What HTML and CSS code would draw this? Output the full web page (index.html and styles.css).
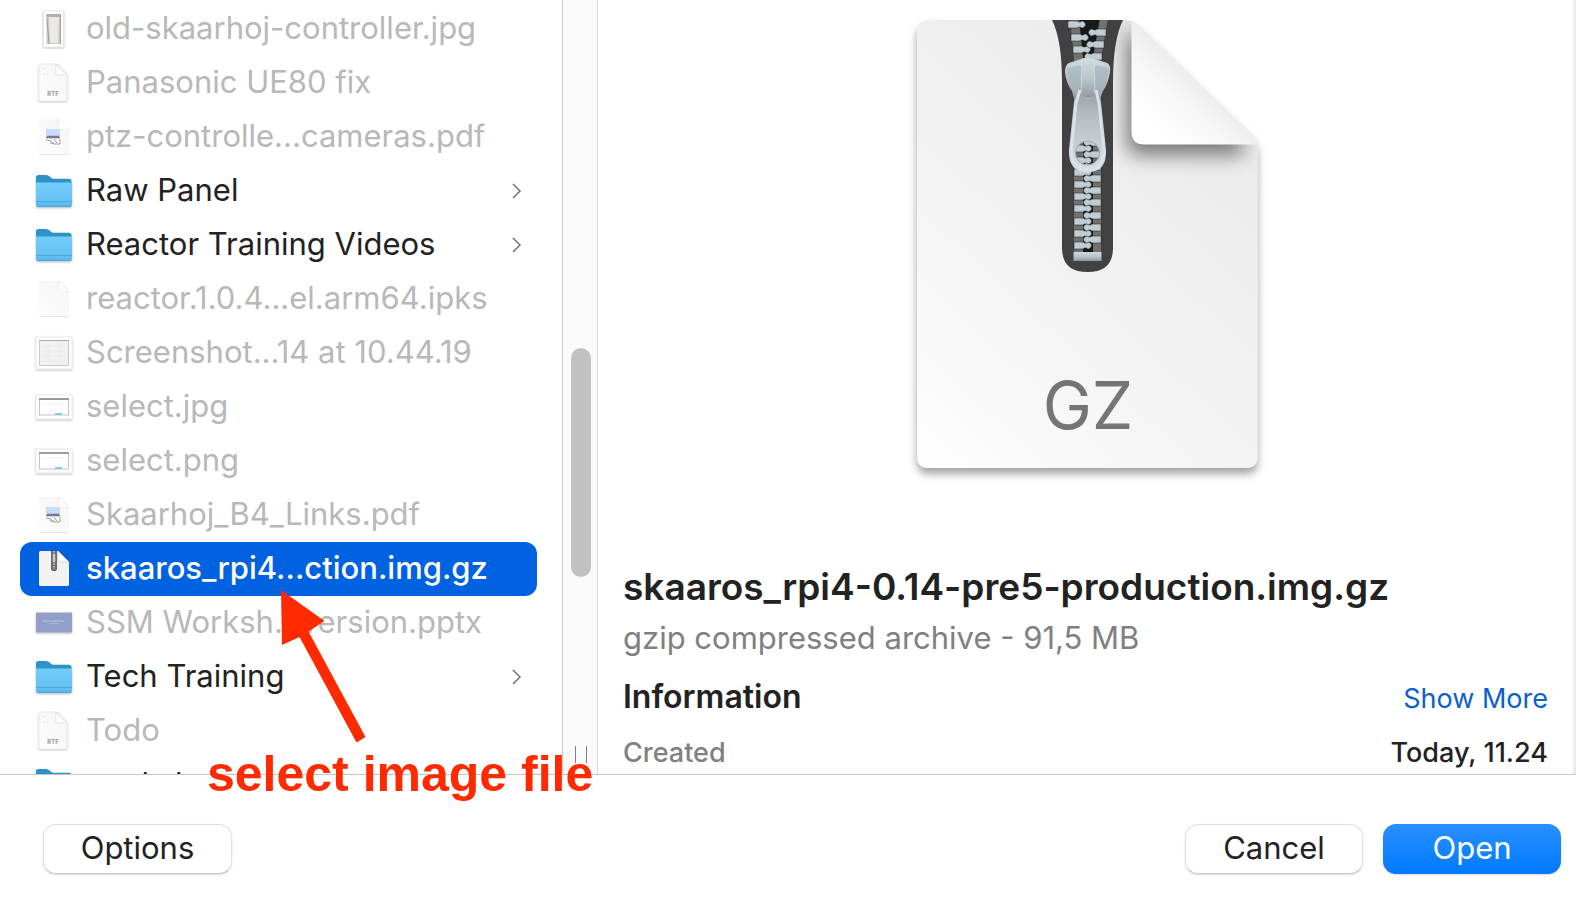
FILE: index.html
```
<!DOCTYPE html>
<html lang="en">
<head>
<meta charset="utf-8">
<title>Open</title>
<link rel="stylesheet" href="styles.css">
</head>
<body>
<svg class="defs" aria-hidden="true">
  <defs>
    <linearGradient id="folderFront" x1="0" y1="0" x2="0" y2="1"><stop offset="0" stop-color="#74cdfb"/><stop offset=".72" stop-color="#66c3f4"/><stop offset="1" stop-color="#58b7ea"/></linearGradient>
    <linearGradient id="sheet" x1="1" y1="0" x2="0" y2="1"><stop offset="0" stop-color="#f4f4f4"/><stop offset="1" stop-color="#fdfdfd"/></linearGradient>
    <filter id="soft" x="-20%" y="-20%" width="140%" height="150%"><feDropShadow dx="0" dy="1" stdDeviation="0.8" flood-color="#000" flood-opacity=".28"/></filter>
    <filter id="faint" x="-20%" y="-20%" width="140%" height="150%"><feDropShadow dx="0" dy=".6" stdDeviation="0.7" flood-color="#000" flood-opacity=".18"/></filter>
    <symbol id="folder" viewBox="0 0 40 40">
      <g filter="url(#soft)">
        <path d="M2 6.500q0-2.500 2.500-2.500h7.500q2 0 3.500 1.500l1.500 1.300q1 .9 2.500.9h15.500q2.500 0 2.500 2.500v8H2z" fill="#2f92c8"/>
        <path d="M2 12.500q0-1 1-1h34q1 0 1 1v21q0 2.500-2.500 2.500h-31Q2 36 2 33.500z" fill="url(#folderFront)"/>
        <path d="M2.500 30.500h35" stroke="#4aa6da"/>
        <path d="M3 35.300h34" stroke="#449fd2" stroke-width=".8"/>
      </g>
    </symbol>
    <symbol id="page" viewBox="0 0 40 40">
      <g filter="url(#faint)">
        <path d="M5 3.500q0-1.500 1.500-1.500H24l11 11v22.500q0 1.500-1.500 1.500h-27Q5 37 5 35.500z" fill="url(#sheet)"/>
        <path d="M24.500 2v8.500q0 2 2 2H35z" fill="#fff" stroke="#e6e6e6" stroke-width=".6"/>
      </g>
    </symbol>
    <symbol id="rtf" viewBox="0 0 40 40">
      <g filter="url(#soft)">
        <path d="M5 2.500Q5 1 6.500 1H23l10 10v25.500q0 1.500-1.500 1.500h-25Q5 38 5 36.500z" fill="url(#sheet)" stroke="#ddd" stroke-width=".5"/>
        <path d="M22 1v9.500q0 1.500 1.500 1.500H33z" fill="#fff" stroke="#d8d8d8" stroke-width=".7"/>
      </g>
      <path d="M9 6h2M9 11h2M13 11h1" stroke="#e0e0e0" stroke-width=".8"/>
      <text x="19" y="33" text-anchor="middle" class="rtf-label">RTF</text>
    </symbol>
    <symbol id="pdf" viewBox="0 0 40 40">
      <use href="#page"/>
      <rect x="12" y="12" width="14" height="7" fill="#c9ddfb"/>
      <path d="M12 20.500h14M13 19.500h12" stroke="#737a89" stroke-width="1.300"/>
      <path d="M12 23l5 1 2 3h7v-5M20 22l3 4M16 26h4" stroke="#9aa0aa" fill="none"/>
    </symbol>
    <symbol id="photo" viewBox="0 0 40 40">
      <rect x="9.500" y="2" width="20" height="36" fill="#fff" stroke="#ddd" stroke-width=".6" filter="url(#soft)"/>
      <path d="M12.500 5h14v30h-14z" fill="#cfcac8"/><path d="M15 8h10l-1 26h-8z" fill="#ebe8e6"/>
      <path d="M12.500 5h14v3h-14z" fill="#b3afb0"/><path d="M13 9l2 26M26.500 5v30" stroke="#a59d9b"/>
    </symbol>
    <symbol id="shot" viewBox="0 0 40 40">
      <rect x="2" y="4" width="36" height="32" fill="#fff" stroke="#ddd" stroke-width=".6" filter="url(#soft)"/>
      <rect x="5.500" y="7.500" width="29" height="25" fill="#f1f1f1" stroke="#bbb" stroke-width=".8"/>
      <path d="M5 7.500h30" stroke="#aaa"/><path d="M8 13h24M8 18h24M8 23h24M8 28h24M14 10v20M26 10v20" stroke="#e8e8e8" stroke-dasharray="2 1"/>
    </symbol>
    <symbol id="wide" viewBox="0 0 40 40">
      <rect x="2" y="8" width="36" height="24" fill="#fff" stroke="#ddd" stroke-width=".6" filter="url(#soft)"/>
      <rect x="5.500" y="12" width="29" height="16" fill="#fff" stroke="#b5b5b5" stroke-width=".8"/>
      <path d="M5 12h30" stroke="#777" stroke-width="1.300"/><path d="M8 17h22" stroke="#f0f0f0"/><path d="M21 27h7" stroke="#7fcdec" stroke-width="2"/>
    </symbol>
    <symbol id="slide" viewBox="0 0 40 40">
      <rect x="2" y="9.500" width="36" height="20" fill="#929fc8" filter="url(#soft)"/>
      <path d="M9 18h22" stroke="#c6cde6" stroke-dasharray="2 .7"/><path d="M15 20.500h10" stroke="#aab4d8"/>
    </symbol>
    <symbol id="zip" viewBox="0 0 40 40">
      <path d="M5 3.500Q5 2 6.500 2H24l11 11v22.500q0 1.500-1.500 1.500h-27Q5 37 5 35.500z" fill="#f2f2f2"/>
      <path d="M24 2v9q0 2 2 2h9z" fill="#fff" stroke="#c7c7c7" stroke-width=".7"/>
      <path d="M17 2h6v18q0 2-3 2t-3-2z" fill="#6a6a6d"/><path d="M20 2v4M20 12v8" stroke="#b7bec1" stroke-width="2" stroke-dasharray="1.500 1"/><path d="M20 5v8" stroke="#c4cccf" stroke-width="2.500"/>
    </symbol>
    <symbol id="chevron" viewBox="0 0 10 16"><path d="M1 1l7 7-7 7" fill="none" stroke="#777" stroke-width="1.600"/></symbol>
  </defs>
</svg>
<main class="dialog">
  <div class="browser">
    <ul class="files">
      <li class="file dim"><svg class="icon"><use href="#photo"/></svg><span>old-skaarhoj-controller.jpg</span></li>
      <li class="file dim"><svg class="icon"><use href="#rtf"/></svg><span>Panasonic UE80 fix</span></li>
      <li class="file dim"><svg class="icon"><use href="#pdf"/></svg><span>ptz-controlle...cameras.pdf</span></li>
      <li class="file"><svg class="icon"><use href="#folder"/></svg><span>Raw Panel</span><svg class="chevron"><use href="#chevron"/></svg></li>
      <li class="file"><svg class="icon"><use href="#folder"/></svg><span>Reactor Training Videos</span><svg class="chevron"><use href="#chevron"/></svg></li>
      <li class="file dim"><svg class="icon"><use href="#page"/></svg><span>reactor.1.0.4...el.arm64.ipks</span></li>
      <li class="file dim"><svg class="icon"><use href="#shot"/></svg><span>Screenshot...14 at 10.44.19</span></li>
      <li class="file dim"><svg class="icon"><use href="#wide"/></svg><span>select.jpg</span></li>
      <li class="file dim"><svg class="icon"><use href="#wide"/></svg><span>select.png</span></li>
      <li class="file dim"><svg class="icon"><use href="#pdf"/></svg><span>Skaarhoj_B4_Links.pdf</span></li>
      <li class="file selected"><svg class="icon"><use href="#zip"/></svg><span>skaaros_rpi4...ction.img.gz</span></li>
      <li class="file dim"><svg class="icon"><use href="#slide"/></svg><span>SSM Worksh...version.pptx</span></li>
      <li class="file"><svg class="icon"><use href="#folder"/></svg><span>Tech Training</span><svg class="chevron"><use href="#chevron"/></svg></li>
      <li class="file dim"><svg class="icon"><use href="#rtf"/></svg><span>Todo</span></li>
      <li class="file"><svg class="icon"><use href="#folder"/></svg><span>workshop</span></li>
    </ul>
    <div class="scrollbar"><div class="thumb"></div><div class="grip"></div></div>
    <section class="preview">
      <svg class="artwork" viewBox="899 0 374 500" role="img" aria-label="GZ archive">
        <defs>
          <linearGradient id="paper" x1=".8" y1="0" x2=".1" y2="1"><stop offset="0" stop-color="#eaeaea"/><stop offset=".5" stop-color="#f1f1f1"/><stop offset="1" stop-color="#fdfdfd"/></linearGradient>
          <linearGradient id="curl" gradientUnits="userSpaceOnUse" x1="1200" y1="75" x2="1155" y2="125"><stop offset="0" stop-color="#ececec"/><stop offset=".5" stop-color="#f7f7f7"/><stop offset="1" stop-color="#fff"/></linearGradient>
          <linearGradient id="metal" x1="0" y1="0" x2="0" y2="1"><stop offset="0" stop-color="#cfdade"/><stop offset=".5" stop-color="#b9c5ca"/><stop offset="1" stop-color="#909698"/></linearGradient>
          <linearGradient id="pull" x1="0" y1="0" x2="0" y2="1"><stop offset="0" stop-color="#999b9d"/><stop offset=".35" stop-color="#b8bfc3"/><stop offset="1" stop-color="#d6e0e7"/></linearGradient>
          <filter id="paperShadow" x="-10%" y="-10%" width="120%" height="120%"><feDropShadow dx="0" dy="6" stdDeviation="4.500" flood-color="#000" flood-opacity=".36"/></filter>
          <filter id="blur" x="-50%" y="-50%" width="200%" height="200%"><feGaussianBlur stdDeviation="10"/></filter>
          <clipPath id="paperClip"><path d="M917 32q0-12 12-12h196q8 0 14 6l112 108q6.500 6 6.500 15v307q0 12-12 12H929q-12 0-12-12z"/></clipPath>
          <clipPath id="tapeClip"><path d="M1052 20h71q-10 20-10 62v166q0 24-25.500 24T1062 248V82q0-42-10-62z"/></clipPath>
          <path id="toothL" d="M1074 0h8q2 0 2.500 1h1.500a3.300 3.300 0 1 1 0 5h-1.500q-.5 1-2.500 1h-8z" fill="#c1cdd2" stroke="#18191a" stroke-width=".5"/>
          <path id="toothR" d="M1101 0h-8q-2 0-2.500 1H1089a3.300 3.300 0 1 0 0 5h1.500q.5 1 2.500 1h8z" fill="#c1cdd2" stroke="#18191a" stroke-width=".5"/>
        </defs>
        <path d="M917 32q0-12 12-12h196q8 0 14 6l112 108q6.500 6 6.500 15v307q0 12-12 12H929q-12 0-12-12z" fill="url(#paper)" filter="url(#paperShadow)"/>
        <g clip-path="url(#paperClip)">
          <path d="M1127 25v117q0 13 12 13h105v-14z" fill="#000" opacity=".5" filter="url(#blur)"/>
        </g>
        <path d="M1131.500 20.500q5 2 9 6l110 107q7 7 6 11h-112q-13 0-13-13z" fill="url(#curl)"/>
        <g clip-path="url(#tapeClip)">
          <path d="M1050 18h75v256h-75z" fill="#414143"/>
          <path d="M1070 18h38l-7 40v194h-27V58z" fill="#6f7172"/>
          <path d="M1079 18h21l-7 40v194h-10V58z" fill="#18191a"/>
          <use href="#toothL" x="-6" y="21"/><use href="#toothL" x="-3" y="34"/><use href="#toothL" x="-1" y="46"/>
          <use href="#toothR" x="5" y="29"/><use href="#toothR" x="3" y="41"/><use href="#toothR" x="1" y="53"/>
          <use href="#toothL" y="145"/><use href="#toothL" y="157"/><use href="#toothL" y="169"/><use href="#toothL" y="181"/><use href="#toothL" y="193"/><use href="#toothL" y="205"/><use href="#toothL" y="218"/><use href="#toothL" y="230"/><use href="#toothL" y="242"/>
          <use href="#toothR" y="139"/><use href="#toothR" y="151"/><use href="#toothR" y="163"/><use href="#toothR" y="175"/><use href="#toothR" y="187"/><use href="#toothR" y="199"/><use href="#toothR" y="212"/><use href="#toothR" y="224"/><use href="#toothR" y="236"/>
        </g>
        <path d="M1073.500 252h28v9h-28z" fill="url(#metal)"/>
        <path d="M1078 60q10-5 20 0l9 3q4 2 3 9-2 12-7 19l-3 8q-12 3-26 0l-2-8q-6-8-7-19 0-7 4-9z" fill="url(#metal)"/>
        <path d="M1067 69q8-4 15-3v24l-6 5q-8-11-9-26zM1109 69q-7-4-14-3v24l5 5q8-11 9-26z" fill="#a3b4bd" opacity=".65"/>
        <path d="M1082 60h12l1 35q-7 8-14 0z" fill="url(#metal)" stroke="#dce3e6" stroke-width=".7"/>
        <path fill-rule="evenodd" d="M1080 88q1 10 7.500 11t8.500-11l5 13 5 49q1 22-18.500 22t-18.500-22l5-49zM1087.500 141a12 12 0 1 0 0 24 12 12 0 1 0 0-24z" fill="url(#pull)"/>
        <path d="M1080 90l-4 13-5 49q2 17 16.500 18t16.500-18l-5-49-3-13" fill="none" stroke="#d9e2e8" stroke-width="3"/>
        <circle cx="1087.500" cy="153" r="12" fill="none" stroke="#9ca8af" stroke-width="1"/>
        <text x="1088" y="429" text-anchor="middle" class="kind">GZ</text>
      </svg>
      <h1 class="name">skaaros_rpi4-0.14-pre5-production.img.gz</h1>
      <p class="summary">gzip compressed archive - 91,5 MB</p>
      <div class="line info"><h2>Information</h2><a href="#">Show More</a></div>
      <div class="line detail"><span>Created</span><span class="value">Today, 11.24</span></div>
    </section>
  </div>
  <footer class="actions">
    <button class="button options" type="button">Options</button>
    <button class="button" type="button">Cancel</button>
    <button class="button primary" type="button">Open</button>
  </footer>
  <svg class="arrow" viewBox="281 590 85 153" aria-hidden="true"><path d="M281 590l43.500 31-16 10.500 57 105.500-9 5.500-57-105.500-17.500 8z" fill="#ff2a00"/></svg>
  <div class="callout">select image file</div>
</main>
</body>
</html>
```
FILE: styles.css
```
* { box-sizing: border-box; }
body { margin: 0; background: #fff; color: #222; font-family: Inter, "Liberation Sans", sans-serif; }
h1, h2, p, ul { margin: 0; padding: 0; }
.defs { position: absolute; width: 0; height: 0; }
.dialog { position: relative; display: flex; flex-direction: column; height: 100vh; overflow: hidden; }
.browser { flex: 1; min-height: 0; display: grid; grid-template-columns: 562px 36px 1fr; border-bottom: 1px solid #c4c4c4; }
.files { list-style: none; padding: 2px 25px 0 20px; overflow: hidden; }
.file { display: flex; align-items: center; gap: 12px; height: 54px; padding: 0 15px 0 14px; font-size: 31px; white-space: nowrap; }
.file span { padding-bottom: 3px; }
.icon { width: 40px; height: 40px; flex: none; }
.dim { color: #b8b8b8; }
.selected { background: #0062e1; color: #fff; border-radius: 12px; font-weight: 500; }
.chevron { width: 10px; height: 16px; margin-left: auto; }
.rtf-label { font: 700 6px Inter, sans-serif; fill: #999; }
.scrollbar { display: flex; flex-direction: column; align-items: center; justify-content: space-between; padding: 348px 0 11px 1px; background: #fafafa; border-left: 1px solid #c8c8c8; border-right: 1px solid #d8d8d8; }
.thumb { width: 20px; height: 229px; border-radius: 10px; background: #c1c1c1; }
.grip { width: 12px; height: 17px; border: solid #808080; border-width: 0 1px; }
.preview { display: flex; flex-direction: column; min-width: 0; overflow: hidden; padding: 0 25px; border-right: 3px solid #ececec; }
.artwork { width: 374px; height: 500px; flex: none; align-self: center; }
.kind { font: 400 66px Inter, sans-serif; fill: #757575; }
.name { margin-top: 64px; font-size: 37px; line-height: 46px; font-weight: 600; white-space: nowrap; }
.summary { margin-top: 8px; font-size: 31px; line-height: 40px; color: #808080; }
.line { display: flex; align-items: baseline; justify-content: space-between; }
.info { margin-top: 19px; line-height: 40px; }
.info h2 { font-size: 32px; font-weight: 600; }
.info a { font-size: 27px; color: #0a60d0; text-decoration: none; }
.detail { margin-top: 16px; font-size: 27px; line-height: 36px; color: #808080; font-weight: 500; }
.value { color: #222; }
.actions { display: flex; align-items: flex-start; gap: 20px; height: 131px; flex: none; padding: 49px 15px 0 43px; }
.button { width: 178px; height: 50px; border: 1px solid #e0e0e0; border-bottom-color: #c8c8c8; border-radius: 13px; background: #fff; box-shadow: 0 1px 2px #00000026; color: #222; font: 400 31px Inter, sans-serif; padding: 0 0 4px; }
.options { width: 189px; margin-right: auto; }
.primary { border: 0; background: linear-gradient(#2a90ff, #007aff); color: #fff; }
.arrow { position: absolute; left: 281px; top: 590px; width: 85px; height: 153px; }
.callout { position: absolute; left: 207px; top: 745px; font: 700 50px/58px "Liberation Sans", sans-serif; color: #ff2a00; white-space: nowrap; }
```
